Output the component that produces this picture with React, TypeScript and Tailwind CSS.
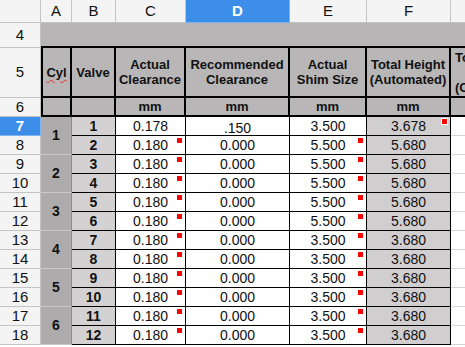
const hdr = 'bg-[#f4f4f4] border-r border-b border-[#c4c4c4] flex items-center justify-center text-[15px] text-[#111]';
const hdrSel = 'bg-[#3d8ee8] border-r border-b border-[#7fb2ee] flex items-center justify-center text-[15px] font-bold text-white';
const th = 'bg-[#b8b6b6] border-r-2 border-b-2 border-black flex flex-col items-center justify-center text-center font-bold text-[13px] leading-[15px] text-[#111]';
const td = 'relative border-r border-b border-black flex items-center justify-center text-[14px] text-[#111]';

const rows = [
  { c: '0.178', d: '.150', e: '3.500', f: '3.678' },
  { c: '0.180', d: '0.000', e: '5.500', f: '5.680' },
  { c: '0.180', d: '0.000', e: '5.500', f: '5.680' },
  { c: '0.180', d: '0.000', e: '5.500', f: '5.680' },
  { c: '0.180', d: '0.000', e: '5.500', f: '5.680' },
  { c: '0.180', d: '0.000', e: '5.500', f: '5.680' },
  { c: '0.180', d: '0.000', e: '3.500', f: '3.680' },
  { c: '0.180', d: '0.000', e: '3.500', f: '3.680' },
  { c: '0.180', d: '0.000', e: '3.500', f: '3.680' },
  { c: '0.180', d: '0.000', e: '3.500', f: '3.680' },
  { c: '0.180', d: '0.000', e: '3.500', f: '3.680' },
  { c: '0.180', d: '0.000', e: '3.500', f: '3.680' },
];

function Mark({ outlined }: { outlined?: boolean }) {
  return outlined ? (
    <span className="absolute right-[2px] top-[1px] w-[7px] h-[7px] bg-[#ff0000] border border-white" />
  ) : (
    <span className="absolute right-[3px] top-[2px] w-[5px] h-[5px] bg-[#ff0000]" />
  );
}

export default function App() {
  return (
    <div className="w-[465px] h-[347px] overflow-hidden bg-white font-['Liberation_Sans',Arial,sans-serif]">
      <div className="grid w-[465px] grid-cols-[41px_31px_44px_70px_104px_77px_84px_14px] grid-rows-[23px_25px_50px_19px_repeat(12,19px)]">
        {/* column headers */}
        <div className={hdr} />
        <div className={hdr}>A</div>
        <div className={hdr}>B</div>
        <div className={hdr}>C</div>
        <div className={hdrSel}>D</div>
        <div className={hdr}>E</div>
        <div className={hdr}>F</div>
        <div className="bg-[#f4f4f4] border-b border-[#c4c4c4]" />

        {/* row 4 band */}
        <div className={hdr}>4</div>
        <div className="col-span-7 bg-[#b7b5b5] border-b-2 border-black" />

        {/* row 5 titles */}
        <div className={hdr}>5</div>
        <div className={th + ' border-l-2'}>
          <span className="underline decoration-wavy decoration-[#e03030] decoration-1 underline-offset-2">Cyl</span>
        </div>
        <div className={th}>Valve</div>
        <div className={th}>
          <span>Actual</span>
          <span>Clearance</span>
        </div>
        <div className={th}>
          <span>Recommended</span>
          <span>Clearance</span>
        </div>
        <div className={th}>
          <span>Actual</span>
          <span>Shim Size</span>
        </div>
        <div className={th}>
          <span>Total Height</span>
          <span>(Automated)</span>
        </div>
        <div className="bg-[#b8b6b6] border-b-2 border-black flex flex-col justify-center pl-[4px] font-bold text-[13px] leading-[15px] text-[#111] overflow-hidden whitespace-nowrap">
          <span>To</span>
          <span>&nbsp;</span>
          <span>(C</span>
        </div>

        {/* row 6 units */}
        <div className={hdr}>6</div>
        <div className={th + ' border-l-2'} />
        <div className={th} />
        <div className={th}>mm</div>
        <div className={th}>mm</div>
        <div className={th}>mm</div>
        <div className={th}>mm</div>
        <div className="bg-[#b8b6b6] border-b-2 border-black" />

        {/* data rows */}
        {rows.map((r, i) => (
          <div key={i} className="contents">
            <div className={i === 0 ? hdrSel : hdr}>{i + 7}</div>
            {i % 2 === 0 && (
              <div className="row-span-2 bg-[#adabab] border-r border-b border-r-[#8c8a8a] border-b-[#c9c7c7] flex items-center justify-center font-bold text-[14px] text-[#111]">
                {i / 2 + 1}
              </div>
            )}
            <div className={td + ' bg-[#d3d1d1] font-bold'}>{i + 1}</div>
            <div className={td}>
              {r.c}
              {i > 0 && <Mark />}
            </div>
            <div className={td + (i === 0 ? ' !items-start pt-[1px]' : '')}>{r.d}</div>
            <div className={td}>
              {r.e}
              {i > 0 && <Mark />}
            </div>
            <div className={td + ' bg-[#d0cece]'}>
              {r.f}
              {i === 0 && <Mark outlined />}
            </div>
            <div className="border-b border-[#d4d4d4]" />
          </div>
        ))}
      </div>
    </div>
  );
}
